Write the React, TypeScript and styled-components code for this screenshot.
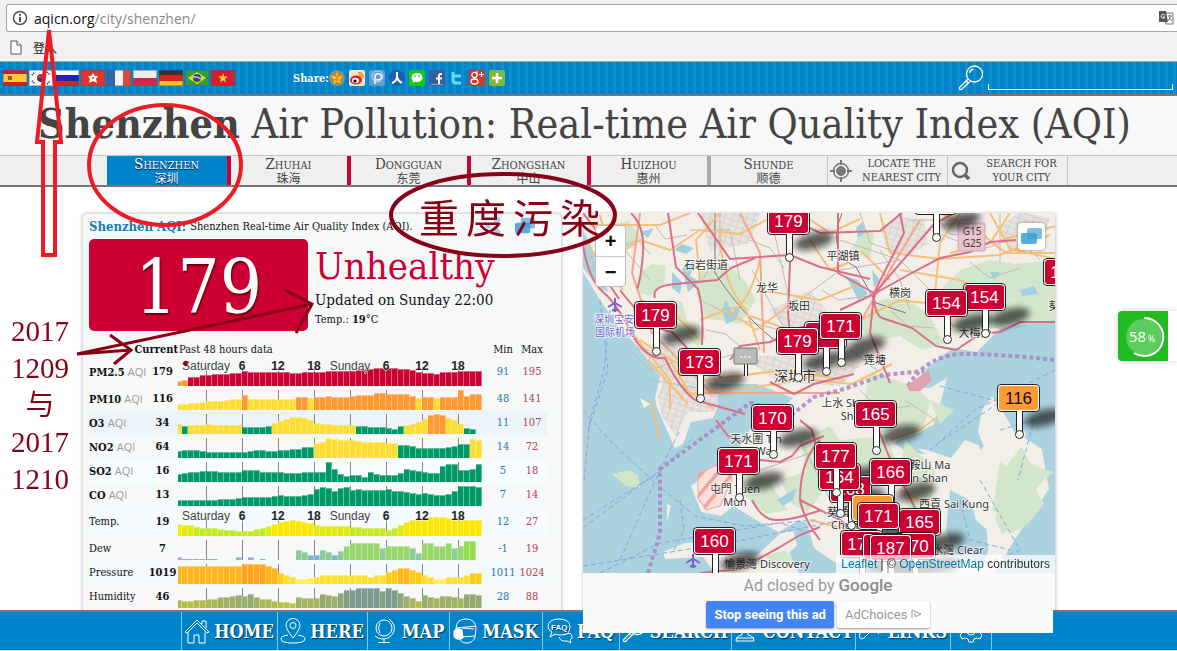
import React from 'react';
import styled, { createGlobalStyle, css } from 'styled-components';

const serif = `'DejaVu Serif Condensed', 'Liberation Serif', 'Noto Sans CJK SC', serif`;
const sans = `'Liberation Sans', 'Noto Sans CJK SC', sans-serif`;
const blue = '#0084c9';
const red = '#cc0033';
const ink = '#880015';

const GlobalStyle = createGlobalStyle`
  * { box-sizing: border-box; }
  body { margin: 0; background: #fff; font-family: ${serif}; color: #222; }
  button, input { font: inherit; }
  a { color: inherit; text-decoration: none; }
`;

const Page = styled.div`
  position: relative;
  height: 100vh;
  overflow: hidden;
`;

/* ---------- browser chrome ---------- */
const Chrome = styled.div`
  height: 62px;
  padding: 4px 0 0 6px;
  background: #f1f1f1;
  border-bottom: 1px solid #aaa;
`;
const Omnibox = styled.div`
  display: flex;
  align-items: center;
  gap: 6px;
  height: 28px;
  padding: 0 3px 0 5px;
  background: #fff;
  border: 1px solid #a5a5a5;
  border-right: 0;
  border-radius: 3px 0 0 3px;
`;
const Address = styled.input`
  width: 0;
  border: 0;
  padding: 0;
`;
const Url = styled.label`
  flex: 1;
  display: flex;
  color: #888;
  font: 14px 'Open Sans', sans-serif;
  b { color: #111; font-weight: 400; }
`;
const Bookmarks = styled.div`
  display: flex;
  align-items: center;
  gap: 11px;
  height: 31px;
  padding-left: 4px;
  font: 12px 'Noto Sans CJK SC', sans-serif;
  color: #222;
`;

/* ---------- page header ---------- */
const TopBar = styled.header`
  display: flex;
  align-items: center;
  height: 34px;
  padding-right: 4px;
  background: repeating-linear-gradient(90deg, #0084c9 0 5px, #118dce 5px 8px);
  border-bottom: 2px solid #777;
  box-shadow: 0 1px 2px #999;
`;
const Flags = styled.nav`
  display: flex;
  gap: 2px;
  padding-left: 3px;
  width: 293px;
  svg { display: block; }
`;
const Share = styled.div`
  display: flex;
  align-items: center;
  gap: 4px;
  flex: 1;
  color: #fff;
  font-size: 11px;
  svg { display: block; }
  b { width: 32px; white-space: nowrap; }
`;
const SearchForm = styled.label`
  display: flex;
  align-items: flex-end;
  gap: 4px;
  width: 215px;
`;
const SearchInput = styled.input`
  flex: 1;
  min-width: 0;
  height: 6px;
  margin-bottom: 1px;
  padding: 0;
  background: transparent;
  border: 0;
  border-left: 1px solid #fff;
  border-right: 1px solid #fff;
  border-bottom: 1px solid #fff;
`;
const Title = styled.h1`
  margin: 0;
  height: 59px;
  padding-right: 8px;
  background: #f8f8f8;
  color: #444;
  text-align: center;
  white-space: nowrap;
  font-size: 41px;
  line-height: 56px;
  font-weight: 400;
`;
const Tabs = styled.nav`
  display: flex;
  justify-content: center;
  height: 32px;
  padding-right: 3px;
  background: #efefef;
  border-top: 1px solid #c4c4c4;
  border-bottom: 2px solid #777;
`;
const Tab = styled.a<{ $active?: boolean; $edge: string }>`
  width: 120px;
  border-left: ${p => (p.$active ? 0 : 4)}px solid ${p => p.$edge};
  text-align: center;
  font-size: 15px;
  line-height: 16px;
  font-variant: small-caps;
  color: #444;
  ${p => p.$active && css`
    color: #fff;
    background: ${blue};
    text-shadow: 0 1px 1px #004;
  `}
  small {
    display: block;
    font: 12px/11px 'Noto Sans CJK SC', sans-serif;
  }
`;
const ToolTab = styled.a`
  display: flex;
  align-items: center;
  width: 120px;
  padding-left: 2px;
  border-left: 1px solid #c4c4c4;
  font-size: 11px;
  line-height: 14px;
  color: #444;
  &:last-child { width: 121px; border-right: 1px solid #c4c4c4; }
  span { flex: 1; padding-left: 5px; text-align: center; white-space: nowrap; }
`;

/* ---------- cards ---------- */
const Main = styled.main`
  display: grid;
  grid-template-columns: 480px 473px;
  gap: 21px;
  max-width: 1013px;
  margin: 0 auto;
  padding-top: 26px;
`;
const Card = styled.section`
  height: 480px;
  background: #f7f9f9;
  border: 1px solid #ddd;
  border-radius: 5px;
  box-shadow: 0 0 3px #bbb;
`;
const AqiCard = styled(Card)` padding: 1px 6px; `;
const MapCard = styled(Card)` border-left: 0; border-top: 0; border-radius: 3px; `;
const CardHead = styled.div`
  display: flex;
  align-items: center;
  height: 22px;
  gap: 4px;
  font-size: 11px;
  color: #111;
  h2 { margin: 0; font-size: 13px; color: #1479bd; }
  p { margin: 0; flex: 1; white-space: nowrap; }
`;
const HeadIcons = styled.span`
  display: flex;
  gap: 12px;
  padding-right: 19px;
`;
const Reading = styled.div`
  display: flex;
  gap: 7px;
  height: 94px;
  margin-top: 2px;
`;
const BigNumber = styled.div`
  width: 219px;
  height: 92px;
  border-radius: 5px;
  background: ${red};
  color: #fff;
  text-align: center;
  font-size: 74px;
  line-height: 96px;
  text-shadow: 1px 2px 2px #600;
`;
const Verdict = styled.div`
  font-size: 15px;
  color: #111;
  white-space: nowrap;
  strong { display: block; font-size: 38px; line-height: 54px; height: 52px; font-weight: 400; color: ${red}; }
  div { line-height: 18px; }
  p { margin: 0; font-size: 11px; line-height: 22px; }
`;
const Table = styled.table`
  width: 458px;
  margin-top: 9px;
  border-collapse: collapse;
  table-layout: fixed;
  font-size: 11px;
  color: #111;
  td, th { padding: 0; white-space: nowrap; }
`;
const HeadRow = styled.tr`
  height: 15px;
  line-height: 14px;
  th { font-weight: 400; }
  th:first-child { text-align: right; font-weight: 700; }
  th:nth-child(2) { text-align: left; padding-left: 1px; }
`;
const Row = styled.tr<{ $bg?: string; $tall?: boolean }>`
  height: ${p => (p.$tall ? 30 : 24)}px;
  background: ${p => p.$bg || 'transparent'};
  line-height: 16px;
  th { text-align: left; font-weight: 400; }
  th span { color: #999; font-family: 'Open Sans', sans-serif; }
  td { text-align: center; }
  td:nth-child(2) { font-weight: 700; }
  td:nth-child(3) { vertical-align: bottom; }
  td:nth-child(4) { color: #1f78b4; }
  td:nth-child(5) { color: #b8404a; }
  svg { display: block; margin-bottom: 1px; }
`;

/* ---------- map ---------- */
const MapBox = styled.div`
  position: relative;
  height: 360px;
  overflow: hidden;
  background: #aad3df;
  font-family: ${sans};
`;
const MapArt = styled.svg`
  display: block;
  width: 472px;
  height: 360px;
`;
const Pin = styled.a<{ $x: number; $y: number; $tone?: string }>`
  position: absolute;
  left: ${p => p.$x - 604}px;
  top: ${p => p.$y - 227}px;
  width: 43px;
  height: 28px;
  padding: 1px;
  border: 1px solid #222;
  border-radius: 4px;
  background: #fff;
  span {
    display: block;
    height: 24px;
    border-radius: 3px;
    text-align: center;
    font-size: 17px;
    line-height: 25px;
    background: ${p => p.$tone || red};
    color: ${p => (p.$tone ? '#111' : '#fff')};
  }
  &::before {
    content: '';
    position: absolute;
    left: 18px;
    top: 26px;
    width: 5px;
    height: 20px;
    background: #fff;
    border: solid #222;
    border-width: 0 1px;
  }
  &::after {
    content: '';
    position: absolute;
    left: 17px;
    top: 45px;
    width: 7px;
    height: 7px;
    background: #fff;
    border: 1px solid #222;
    border-radius: 50%;
  }
`;
const ZoomBox = styled.div`
  position: absolute;
  left: 12px;
  top: 12px;
  width: 31px;
  border: 1px solid #bbb;
  border-radius: 4px;
  background: #fff;
  button {
    display: block;
    width: 100%;
    height: 30px;
    padding: 0;
    border: 0;
    background: none;
    font: bold 20px/28px ${sans};
    color: #111;
  }
  button + button { border-top: 1px solid #ccc; }
`;
const LayerButton = styled.button`
  position: absolute;
  right: 10px;
  top: 10px;
  width: 27px;
  height: 27px;
  padding: 2px;
  border: 0;
  border-radius: 4px;
  background: #fff;
  box-shadow: 0 0 3px #777;
`;
const Credit = styled.div`
  position: absolute;
  right: 0;
  bottom: 0;
  padding: 0 5px;
  background: rgba(255, 255, 255, 0.72);
  font-size: 12px;
  line-height: 18px;
  color: #333;
  a { color: #0078a8; }
`;
const Ad = styled.aside`
  position: relative;
  z-index: 3;
  width: 470px;
  height: 60px;
  background: #fafafa;
  font-family: Roboto, sans-serif;
  text-align: center;
  p { margin: 0; padding-top: 1px; font-size: 16px; line-height: 24px; color: #999; }
  p b { font-weight: 500; font-size: 17px; line-height: 20px; color: #8c8c8c; }
`;
const AdButtons = styled.div`
  display: flex;
  justify-content: center;
  gap: 3px;
  padding-top: 3px;
`;
const AdButton = styled.button<{ $primary?: boolean }>`
  height: 27px;
  padding: 0 8px;
  border: 0;
  border-radius: 2px;
  white-space: nowrap;
  font: ${p => (p.$primary ? '700' : '400')} 13px Roboto, sans-serif;
  background: ${p => (p.$primary ? '#4285f4' : '#fff')};
  color: ${p => (p.$primary ? '#fff' : '#999')};
  box-shadow: 0 1px 2px #999;
`;

/* ---------- floating parts ---------- */
const Footer = styled.nav`
  position: fixed;
  z-index: 2;
  left: 0;
  right: 0;
  bottom: 0;
  display: flex;
  justify-content: center;
  height: 41px;
  padding-right: 5px;
  background: ${blue};
  border-top: 2px solid #777;
  border-bottom: 1px solid #ddd;
`;
const FootLink = styled.a<{ $w: number }>`
  display: flex;
  align-items: center;
  justify-content: center;
  gap: 4px;
  width: ${p => p.$w}px;
  border-right: 1px solid #8cc8ea;
  color: #fff;
  font-size: 18px;
  font-weight: 700;
  text-shadow: 1px 1px 1px #035;
  &:first-child { border-left: 1px solid #8cc8ea; }
  svg { flex: none; }
`;
const Meter = styled.aside`
  position: fixed;
  right: 0;
  top: 311px;
  display: flex;
  width: 59px;
  height: 50px;
  background: #fff;
  border-radius: 4px 0 0 4px;
  box-shadow: 0 0 5px #ccc;
  svg { display: block; border-radius: 4px 0 0 4px; }
`;
const Notes = styled.div`
  position: absolute;
  z-index: 4;
  left: 0;
  top: 0;
  pointer-events: none;
  color: ${ink};
  svg { display: block; }
`;
const DateNote = styled.p`
  position: absolute;
  left: 10px;
  top: 313px;
  width: 60px;
  margin: 0;
  text-align: center;
  font: 29px/37px 'Liberation Serif', 'Noto Sans CJK SC', serif;
`;
const LevelNote = styled.p`
  position: absolute;
  left: 419px;
  top: 188px;
  display: flex;
  gap: 7px;
  margin: 0;
  font: 40px/56px 'Noto Sans CJK SC', sans-serif;
`;

/* ---------- charts ---------- */
type Tint = (h: number, i: number) => string;
const G = '#009966', Y = '#ffde33', O = '#ff9933';
const within = (i: number, list: number[]) => list.includes(i);
const mix = (t: number) => {
  const a = [190, 196, 66], b = [123, 154, 144];
  return `rgb(${a.map((v, k) => Math.round(v + (b[k] - v) * t)).join(',')})`;
};

interface Series { name: string; aqi?: boolean; now: string; min: string; max: string; tall?: boolean; bg?: string; data: number[]; tint: Tint; }
const series: Series[] = [
  { name: 'PM2.5', aqi: true, now: '179', min: '91', max: '195', tall: true,
    data: [5,6,9,9,11,11,12,12,12,13,13,15,14,14,14,14,14,14,14,13,13,14,14,14,14,15,15,15,15,15,16,17,17,18,18,18,18,17,17,16,14,13,13,12,14,14,14,15,15,15,15],
    tint: (_, i) => (i < 2 ? O : red) },
  { name: 'PM10', aqi: true, now: '116', min: '48', max: '141',
    data: [6,6,7,7,8,9,9,9,10,11,11,15,11,11,11,11,11,11,11,11,13,13,12,13,13,14,13,13,13,14,15,15,15,17,17,16,16,16,16,14,12,13,13,12,13,13,13,20,14,16,16],
    tint: (_, i) => (within(i, [11, 20, 21]) || (i > 22 && !within(i, [40, 43])) ? O : Y) },
  { name: 'O3', aqi: true, now: '34', min: '11', max: '107', bg: '#ecf4fa',
    data: [10,8,9,9,9,10,9,9,9,9,9,7,7,7,7,8,11,13,15,17,17,16,14,11,10,10,9,9,9,9,8,8,7,7,7,6,5,8,9,10,12,15,19,20,19,16,14,10,6,5,0],
    tint: (_, i) => (within(i, [42, 43, 44]) ? O : i === 1 || (i > 10 && i < 16) || (i > 29 && i < 38) || i > 47 ? G : Y) },
  { name: 'NO2', aqi: true, now: '64', min: '14', max: '72',
    data: [7,8,8,8,7,6,6,6,6,6,6,6,7,8,8,7,7,8,8,9,9,11,11,15,16,20,19,18,18,18,17,16,16,16,16,15,15,13,13,12,10,10,10,10,10,11,12,14,14,19,18],
    tint: (_, i) => ((i > 22 && i < 37) || i > 48 ? Y : G) },
  { name: 'SO2', aqi: true, now: '16', min: '5', max: '18', bg: '#f6fcff',
    data: [8,9,10,10,11,11,11,10,10,10,10,12,12,12,10,10,10,10,9,9,9,10,10,10,10,20,13,8,6,7,7,5,10,8,7,7,7,9,13,12,11,10,9,9,16,18,18,12,12,13,18],
    tint: () => G },
  { name: 'CO', aqi: true, now: '13', min: '7', max: '14',
    data: [6,6,6,6,6,6,6,7,7,7,8,9,9,9,9,9,10,11,10,10,10,11,12,17,19,18,15,18,19,16,17,16,16,16,16,17,15,15,14,13,12,13,12,11,11,12,15,20,20,20,19],
    tint: () => G },
  { name: 'Temp.', now: '19', min: '12', max: '27', tall: true, bg: '#f5fbff',
    data: [12,11,11,9,8,8,8,7,6,6,5,5,5,7,8,10,12,14,15,16,15,14,13,11,10,10,10,10,10,9,9,8,8,8,8,6,8,11,14,16,17,17,19,19,19,18,17,16,16,16,16],
    tint: h => (h > 11 ? '#fce803' : h > 9 ? '#e2ea10' : '#c4e822') },
  { name: 'Dew', now: '7', min: '-1', max: '19',
    data: [3,1,1,1,1,1,1,0,0,0,3,0,3,0,1,0,0,0,0,0,10,8,5,5,10,8,5,9,14,17,17,17,17,17,12,14,14,14,14,12,7,17,17,14,14,17,12,14,19,19,0],
    tint: (h, i) => (i < 15 ? '#8fb0dd' : h < 6 ? '#82b3cc' : h < 13 ? '#8ecb9a' : h < 18 ? '#98d76a' : '#93de4c') },
  { name: 'Pressure', now: '1019', min: '1011', max: '1024', bg: '#f3f9fd',
    data: [18,18,18,18,18,18,18,18,18,18,18,20,20,20,20,18,16,11,9,7,5,5,6,7,9,9,9,9,9,9,9,9,7,9,9,12,14,16,16,14,12,9,7,5,5,7,7,7,9,11,11],
    tint: h => (h > 18 ? '#ffa51f' : h > 15 ? '#ffb61c' : h > 10 ? '#ffcc1c' : h > 6 ? '#ffe030' : '#fff050') },
  { name: 'Humidity', now: '46', min: '28', max: '88',
    data: [8,7,7,8,8,9,9,11,11,12,13,12,14,11,9,9,7,6,6,5,11,10,10,10,14,13,12,15,18,18,20,20,20,20,17,20,18,15,12,10,7,13,11,10,12,12,11,10,14,14,13],
    tint: h => mix(Math.min(1, (h - 5) / 14)) },
  { name: 'Wind', now: '2', min: '1', max: '6', bg: '#f5fbff',
    data: [1,3], tint: () => '#8fb0dd' },
];
const hours = ['Saturday', '6', '12', '18', 'Sunday', '6', '12', '18'];

function Chart({ s }: { s: Series }) {
  const h = s.tall ? 28 : 20;
  return (
    <svg width="304" height={h} role="img" aria-label={`${s.name} history`}>
      {hours.map((_, k) => <path key={k} d={`M${28.5 + 36 * k} ${s.tall ? 9 : 0}V${h}`} stroke="#888" />)}
      {s.data.map((v, i) => {
        const x = i === 0 ? 0 : 4 + 6 * (i - 1);
        const w = i === 0 ? 4 : 6;
        return v > 0 && (
          <g key={i} fill={s.tint(v, i)}>
            <rect x={x} y={h - v} width={w} height={v} opacity="0.6" />
            <rect x={x} y={h - v + (v > 1 ? 1 : 0)} width={w - 1} height={v > 1 ? v - 1 : 1} />
          </g>
        );
      })}
      {s.tall && hours.map((t, k) => (
        <text key={k} x={28 + 36 * k} y="12" textAnchor="middle" fontFamily="Liberation Sans" fontSize="12"
          fontWeight={t.length > 2 ? 400 : 700} fill={t.length > 2 ? '#444' : '#222'} stroke="#f7f9f9" strokeWidth="1" paintOrder="stroke">{t}</text>
      ))}
    </svg>
  );
}

/* ---------- icons ---------- */
const flagArt: React.ReactNode[] = [
  <><path fill="#c8202c" d="M0 0h24v16H0z" /><path fill="#fc3" d="M0 4h24v8H0z" /><path fill="#a52" d="M5 6h4v4H5z" /></>,
  <><path fill="#fff" d="M0 0h24v16H0z" /><path fill="#c33" d="M8 8a4 4 0 0 1 8 0z" /><path fill="#247" d="M8 8a4 4 0 0 0 8 0z" /><path stroke="#333" strokeWidth="2" strokeDasharray="1 1" d="m3 5 3-3M18 2l3 3M3 11l3 3M18 14l3-3" /></>,
  <><path fill="#fff" d="M0 0h24v6H0z" /><path fill="#22b" d="M0 5h24v6H0z" /><path fill="#d22" d="M0 11h24v5H0z" /></>,
  <><path fill="#e03528" d="M0 0h24v16H0z" /><path fill="#fff" d="m12 3 2 3 3 0-2 3 1 4-4-2-4 2 1-4-2-3 3 0z" /><circle cx="12" cy="8" r="1" fill="#e03528" /></>,
  <><path fill="#3565a8" d="M0 0h8v16H0z" /><path fill="#f4f4f4" d="M8 0h8v16H8z" /><path fill="#e0463c" d="M16 0h8v16h-8z" /></>,
  <><path fill="#eee" d="M0 0h24v8H0z" /><path fill="#d0284c" d="M0 8h24v8H0z" /></>,
  <><path fill="#333" d="M0 0h24v5H0z" /><path fill="#d4281c" d="M0 5h24v6H0z" /><path fill="#f8c020" d="M0 11h24v5H0z" /></>,
  <><path fill="#2ca048" d="M0 0h24v16H0z" /><path fill="#f8d020" d="m12 2 9 6-9 6-9-6z" /><circle cx="12" cy="8" r="4" fill="#24508c" /><path stroke="#fff" d="M8 7q4-1 8 2" fill="none" /></>,
  <><path fill="#d02030" d="M0 0h24v16H0z" /><path fill="#fc3" d="m12 3 1.300 3.500h3.700l-3 2.300 1 3.700-3-2.200-3 2.200 1-3.700-3-2.300h3.700z" /></>,
];
const countries = ['Spain', 'Korea', 'Russia', 'Hong Kong', 'France', 'Poland', 'Germany', 'Brazil', 'Vietnam'];

const shareArt: [string, React.ReactNode][] = [
  ['Qzone', <><circle cx="8" cy="8" r="8" fill="#6a9aa0" /><path fill="#fc2" stroke="#d80" d="m8 1 2 4.500 5 .5-4 3.500 1 5-4-2.500-4 2.500 1-5-4-3.500 5-.5z" /><path d="M6 6h4l-4 4h4" stroke="#c60" fill="none" /></>],
  ['Weibo', <><rect width="16" height="16" rx="2" fill="#f7e3d2" /><ellipse cx="7" cy="10" rx="6" ry="4.500" fill="#d22" /><ellipse cx="6.500" cy="10.500" rx="3.500" ry="2.700" fill="#fff" /><circle cx="6" cy="11" r="1.600" /><path d="M9 3a4 4 0 0 1 5 5M10 5a2 2 0 0 1 2 2" stroke="#f80" fill="none" strokeWidth="1.400" /></>],
  ['Pengyou', <><rect width="16" height="16" rx="2" fill="#5a9fd0" /><path d="M6 14V5.500a3.500 3 0 1 1 1.500 4" stroke="#fff" strokeWidth="1.500" fill="none" /><circle cx="8.500" cy="6.500" r="5.500" stroke="#cde" fill="none" /></>],
  ['Renren', <><circle cx="8" cy="8" r="8" fill="#1c5fae" /><path d="M8 2v5q0 4-5 6M8 7q1 4 5 6" stroke="#fff" strokeWidth="2" fill="none" /></>],
  ['WeChat', <><rect width="16" height="16" rx="2" fill="#1c1" /><ellipse cx="8" cy="7.500" rx="5.500" ry="4.500" fill="#fff" /><path d="m4 10-.5 3 3-2z" fill="#fff" /><circle cx="6" cy="6" r=".8" fill="#1a1" /><circle cx="10" cy="6" r=".8" fill="#1a1" /></>],
  ['Facebook', <><rect width="16" height="16" rx="2" fill="#3560a0" /><path d="M13 4h-1q-2 0-2 2v8M7 8.500h6" stroke="#fff" strokeWidth="2" fill="none" /><path d="M2 14.500h12" stroke="#8ac" /></>],
  ['Twitter', <path d="M4 2v8q0 3 3 3h5M4 6h8" stroke="#5fdcff" strokeWidth="3" fill="none" />],
  ['Google Plus', <><rect width="16" height="16" rx="1" fill="#c43c30" /><circle cx="5.500" cy="5" r="2.600" stroke="#fff" fill="none" strokeWidth="1.300" /><ellipse cx="5.500" cy="11.500" rx="3.500" ry="2.500" stroke="#fff" fill="none" strokeWidth="1.300" /><path d="M12.500 2v5M10 4.500h5M7 2h2" stroke="#fff" strokeWidth="1.200" /></>],
  ['More', <><rect width="16" height="16" rx="2" fill="#80b83c" /><path d="M8 3v10M3 8h10" stroke="#fff" strokeWidth="2.500" /></>],
];

const Glass = ({ size }: { size: number }) => (
  <svg width={size} height={size} viewBox="0 0 26 26" fill="none" stroke="#fff" strokeWidth="1.300">
    <circle cx="16.500" cy="9" r="8" /><path d="M11.500 8a5 5 0 0 1 4-4" /><path d="m10 14-8.500 8.500q-.5 2.500 2 2L12 16.500M8 16l2.500 2" />
  </svg>
);
const Layers = ({ w }: { w: number }) => (
  <svg width={w} height={w} viewBox="0 0 23 23"><rect x="7" y="3" width="15" height="11" rx="2" fill="#7cbfe2" /><rect x="1" y="8" width="16" height="11" rx="2" fill="#3d9fd3" opacity=".85" /></svg>
);
const line = { width: 26, height: 26, viewBox: '0 0 26 26', fill: 'none', stroke: '#fff', strokeWidth: 1 } as const;
const footer: [string, number, React.ReactNode][] = [
  ['HOME', 97, <svg {...line}><path d="M1 14 13 2l12 12-2 1L13 5 3 15zM4 14.500V25h6v-8h5v8h6V14.500M18 6V3h4v7" /></svg>],
  ['HERE', 90, <svg {...line}><path d="M13 20Q6 11 6 7.500a7 7 0 0 1 14 0Q20 11 13 20zM8 17q-7 1-7 4 0 4 12 4t12-4q0-3-7-4" /><circle cx="13" cy="7.500" r="3" /></svg>],
  ['MAP', 82, <svg {...line}><circle cx="12" cy="10" r="8" /><path d="M17 1q7 5 5 12-3 8-11 8Q6 21 3 18M12 21v3M6 24.500h12M8 5q-3 5 0 10" /></svg>],
  ['MASK', 93, <svg {...line}><path d="M4 11Q4 1 14 1t10 10l-1 8q-2 6-8 6t-7-4M4 10l20-2M10 10l12 1M10 19l13-1" /><path fill="#fff" d="M2 13q4-4 8-1l1 8q-5 3-9-1z" /></svg>],
  ['FAQ', 77, <svg {...line}><path d="M12 1q11 0 11 8t-9 8q-4 0-6-1l-5 3 2-5Q1 12 1 9q0-8 11-8zM17 17q8-4 8 2 0 2-2 3l1 3-4-2q-6 1-8-4" /><text x="4" y="12" fontSize="8" fill="#fff" stroke="none" fontFamily="Liberation Sans">FAQ</text></svg>],
  ['SEARCH', 112, <Glass key="g" size={24} />],
  ['CONTACT', 124, <svg {...line}><circle cx="12" cy="9" r="5" /><path d="M9 14v3q-6 1-6 6h18q0-5-6-6v-3M3 20h18" /></svg>],
  ['LINKS', 95, <svg {...line}><path d="m11 15 8-8q3-2 5 0t0 5l-4 4M15 11l-9 9q-3 2-4 0t0-5l4-4" /></svg>],
  ['', 41, <svg {...line}><circle cx="13" cy="13" r="4" /><path d="M11 2h4l1 3 3 1 3-1 2 4-2 2v4l2 2-2 4-3-1-3 1-1 3h-4l-1-3-3-1-3 1-2-4 2-2v-4L2 9l2-4 3 1 3-1z" /></svg>],
];

/* ---------- map content ---------- */
const greens = [
  'M640 272l12-8 14 2-2 18-14 12-14-4zM700 268l22-10 24 24 10 18-16 24-34-6-10-24zM668 298l14 4 6 22 18 14-8 8-24-20zM610 245l12 6 20-14-14-16-20 4z',
  'M880 300l24-4 26 20 14 28-22 6-22-14-30 6-12-20zM930 300l30-30 30-10 26 4 40-4v60l-60 8-40 0zM850 250l14-20 10 4-4 26zM908 234l12-4 2 14-12 4z',
  'M870 372l44 14 16 14-6 30-46 2-16-20zM800 440l30-14 20 30-20 20-20 12zM840 440l46-4 10 24-30 20zM744 466l24 14 20 30-22 4-24-20zM780 480l30-10 14 20-16 22-16-8z',
  'M905 440l30 30-6 50 20 40-30-20-20-60zM930 400l24 10-14 14zM765 556l20-6 8 10-16 10zM1000 460l20-18 8 20 22 10-14 18 8 14-16 20-18 10-14-22 6-20z',
];
const grey = 'M640 350l30-10 24 30 20-4 6 22-6 24-26 0-12 24-14-20-4-20 6-14zM770 310l40-20 16 20-4 40-30 26 0-40zM1000 226l20-14 30 6-10 30-30 6zM740 356h60l60 10-20 20-60-4zM845 490l36 8 10 40-36-4zM700 213h60l-10 30-40 8zM880 228l20-12 24 4 4 24-20 12-20-4z';
const lakes = 'M633 308l8 8-6 10zM672 272l10 10-2 12-8-6zM682 268l14-8-6 16 10 6-12 10zM722 310l4-10 6 12 10-8-6 16-10 4zM846 276l12 4 10 14-10 6zM856 228l6-6 4 10-8 6zM674 250l8-6 12 4-8 6zM640 232l14-4-6 10zM960 240l14 2-10 4zM1020 290l14-4 4 8-16 2zM990 272l10 0-6 8zM872 270l8 10-6 8zM777 500l20-12-4 12-10 6z';
const motorways = [
  'M583 246q6 34 20 46t28 40 34 26q14 30 30 42l50 14',
  'M631 213q14 14 12 40t-6 36M668 213l8 54 22 22q6 20 4 56M698 213l32 46 60-4 30 12 50 12M790 213v50l-2 50 4 40',
  'M655 298q-4-12 20-14l42-4 14-12 24-10M620 290q30 40 52 42l30 32 20 14M730 360l10-14 30-4 30-14 40-12M840 310l34-16 60-70 22-12M780 213l40 20 60-2 24-20M874 294l36-20 30-16 30-6 20-10 26-2',
  'M874 294q0 20 8 24l30 10 24 18 20 4 24-16 20-2 20-10h40M838 213v60l36 20-4 40 20 50M716 420l12 16 14 6M583 213l20 26-4 30 20 30M900 213l4 20-30 60M770 382l24 12 20-10 40-10',
  'M752 500q10 20 24 20t30-5 14-5M820 440q-20 20-20 60 4 20 20 40M700 573l40-4 40-22 20-12 20-8M800 420l12 10 6 24M870 400l8 28 10 26 20 40 20 40M800 500l40 20 40 30 20 20M760 460l20 2 12-6 8-10 24-10',
];
const orange = 'M590 225h70l30-12M610 260l30-20 30 10 30-20 40 4 26-14M640 340l30 20 20 34 30-4 60-6 40-10M655 350l50 30 80-10 60 10M630 330l40 50v30M720 230q0 50 26 80l14 40M700 320l26-10 30 20 40-30M810 240l20 30 20-8M760 260q-10 40-26 50M760 290l60 10 40-16M880 213l10 40 50 6 60-4 50-20M960 213l-20 30-6 60 20 24M900 270l60 10 40 20M990 213l20 36 46 10M1000 240l56-14M860 320l40-20 50 6M940 213l40 20 26 20h50M812 380l40 4 40-20M810 520l40 10 40-14M890 440l30-10 16-12M900 490l40 20M650 400l10 40M680 385l34 24M640 300l30 10 30 30M583 240l40 50M600 215l10 40M800 213l30 20 30-14M860 250l30 30M700 280l-4-40 24-27M790 330l-40-14M1010 213l-20 30-40 10M648 360l40 44';
const streets = 'M583 260l60-20M600 220l50 60M690 230l40 0 10 50M720 213v40l-20 30M752 270l50 90M770 213l20 90M800 300l40-30 60-10M840 240l60 20 40 40M910 220h60l30 30M860 213l10 30 30 10M930 230l50 20 30-10M1000 213v50M630 350l20 20 30-10M850 350l40 30M800 440l40 80 30 40M760 470l60-20M650 380l60 10M740 320l80 20M706 330l20 4 20 18M604 236l14 10 20-6 12 14M655 225l10 14 22-4M750 240l20 8 14 20M700 300l20 10 24-4M822 290l16 10 30-4M890 310l18 16 26 2M970 262l20 16 30-10M940 222l10 12 20 2M880 250l20 30 10 30M1020 240l20 20M690 350l24 10 20-6M860 390l20 20 30-4M905 400l30 20';
const labels: [number, number, string, number?, string?][] = [
  [706, 269, '石岩街道'], [767, 292, '龙华'], [799, 310, '坂田'], [843, 260, '平湖镇'], [900, 297, '横岗'], [975, 337, '大梅沙'], [875, 364, '莲塘'],
  [795, 381, '深圳市', 14], [614, 323, '深圳宝安', 10, '#76c'], [615, 336, '国际机场', 10, '#76c'], [840, 407, '上水 Sh'], [852, 420, 'Shui'],
  [756, 443, '天水圍 Tin'], [765, 455, 'Wai'], [735, 493, '屯門 Tuen'], [735, 506, 'Mun'], [930, 469, '鞍山 Ma'], [930, 482, 'n Shan'], [954, 508, '西貢 Sai Kung'],
  [838, 516, '葵涌'], [848, 529, 'Chung'], [958, 554, '水灣 Clear'], [767, 568, '愉景灣 Discovery'], [1054, 310, '葵'],
];
const pins: [number, number, string, string?][] = [
  [935, 201, ''], [788, 221, '179'], [1064, 272, '157'], [984, 297, '154'], [946, 303, '154'], [655, 315, '179'], [825, 335, ''], [840, 326, '171'],
  [797, 341, '179'], [699, 362, '173'], [1018, 398, '116', '#ff9933'], [875, 414, '165'], [772, 418, '170'], [850, 489, '168'], [839, 477, '164'], [835, 456, '177'], [738, 461, '171'],
  [890, 472, '166'], [872, 508, '', '#ff9933'], [919, 522, '165'], [878, 516, '171'], [714, 541, '160'], [861, 544, '174'], [914, 546, '170'], [883, 547, ''], [890, 548, '187'],
];

function MapDrawing() {
  return (
    <MapArt viewBox="583 213 472 360" aria-label="Shenzhen area map">
      <defs>
        <filter id="soft"><feGaussianBlur stdDeviation="3" /></filter>
        <pattern id="blocks" width="7" height="6" patternUnits="userSpaceOnUse" patternTransform="rotate(18)"><path d="M0 0H7M0 0V6" stroke="#c8c4c0" strokeWidth="1" fill="none" /></pattern>
        <pattern id="hatch" width="12" height="12" patternUnits="userSpaceOnUse" patternTransform="rotate(40)"><path d="M0 0V12" stroke="#f2a09c" strokeWidth="7" /></pattern>
      </defs>
      <g fill="#f2efe9">
        <path d="M583 213h472v107l-22 0-33 8-23 24-24-4-23 17-20 22 20 1 17-10-7 27-7 20-6 5-30 10 3 6 27 4 24 8 14-18 16 6 10-14-14-16 12-30 14 20 26-8-4 40 24 16-4 20 22 14-4 20-20 10-30 44-8 24-120 4-36-20-14-36-36-14-20 12-16-8-30-18-12 10-20-4-10-26 24-18 24-20 20-34 24-6 10-10-36-14h-38l-2 24-4 10-22 4-8 22-8 4-18-40-2-10 6-26-18-20-25-26-18-26-12-20-13-20z" />
        <path d="M663 552l22-9 28-2 6 12 38 2 24-22 12-2 4 14-8 8 10 20h-84l-12-16-38 2z" />
        <path d="M806 520l30 12 34 20-10 12-26-2-20-14z" />
      </g>
      <g fill="#aad3df">
        <path d="M1055 322l-54 8-22 24-24 2-24 20-6 10 22-10 6 8-14 24 4 10 26 8 12 24 20-30 12 20 14-10 28 2z" />
        <path d="M583 230l10 20 4 24 12 18-10-4-16-20z" />
        <path d="M894 442l20-6 16-10 24 0-14 10-24 12 10 6-20-2zM950 490l20 10 6 20 18 16-12 30-30-14-6-22zM846 546l30 6 60 8-10 20h-80zM1040 440h15v133h-60l20-34 34-50z" />
      </g>
      <g fill="#d3e6cb">{greens.map(d => <path key={d} d={d} />)}</g>
      <path d="M1000 462l18-22 14 26 22 6-20 16 4 16-14 20-22 10-10-22zM630 470l8 6 2 12-14-2-14-12z" fill="#d3e6cb" />
      <g fill="#f2efe9"><path d="M982 410l10-14 16 24 14 26-16 20-20-14-8-20zM964 470l6-14 14 12 8 20-16 8zM640 398l10 6-6 4zM985 505l12 8-4 10zM986 520l10 20-8 10zM667 504l4 2-4 16z" /></g>
      <path d={grey} fill="#e6e2dd" /><path d={grey} fill="url(#blocks)" />
      <path d="M698 474l20-10 10-4 4 20-12 26-14 4-8-12z" fill="#fde0dc" /><path d="M698 474l20-10 10-4 4 20-12 26-14 4-8-12z" fill="url(#hatch)" stroke="#f0a09c" />
      <path d={lakes} fill="#a4cfdf" />
      <path d={streets} stroke="#bfbab6" fill="none" />
      <path d="M842 213q-16 40 14 54l20 36 30 10M715 213v60q40 60 80 80" stroke="#777" fill="none" />
      <path d={orange} stroke="#f5c07a" strokeWidth="2" fill="none" strokeLinejoin="round" />
      <path d="M740 213l20 40 4 100M640 213l-8 60 20 60 60 60M850 340l40-70 30-50M700 393h140" stroke="#f4a58c" strokeWidth="2" fill="none" />
      <g stroke="#dc6f86" strokeWidth="2" fill="none" strokeLinejoin="round">{motorways.map(d => <path key={d} d={d} />)}</g>
      <path d="M583 410l26 30 50 46 36 30 50 10 70-6M583 528l80-60 30-30M583 566l150-24 100-20M620 560l40-90 20-40M610 310l-6 60-14 50-6 60M680 500l4 30-10 20M940 386l60 16-60 40-10 8M1055 370l-80 40-40 36M1000 430l34-10-16 60M980 480l40 70-40 16M960 500l10 40 40 10M600 300l8 70-20 60" stroke="#86a6e0" strokeDasharray="5 3" fill="none" />
      <path d="M583 520l80-50M600 573l60-30 120-20 30 10" stroke="#86a6e0" strokeDasharray="5 3" fill="none" />
      <path d="M648 573l12-40v-64l90-66 44 10 20-16 30-8 40-14 40-4M908 386q20-32 56-32t91 6" stroke="#a97fc4" strokeWidth="4" strokeDasharray="4 3" opacity=".8" fill="none" />
      <path d="M908 386l20-14 2 8-10 10-10 0z" fill="#d9a5b4" stroke="#ee9aa5" strokeWidth="2" />
      <path d="M615 298v14M608 307l7-4 7 4M612 311l3-2 3 2" stroke="#8461c4" strokeWidth="2" fill="none" />
      <path d="M693 554v14M686 563l7-4 7 4M690 567l3-2 3 2" stroke="#8461c4" strokeWidth="2" fill="none" />
      <g fill="#333" fontFamily="Noto Sans, Noto Sans CJK SC" textAnchor="middle" stroke="#fff" strokeWidth="2" strokeOpacity=".7" paintOrder="stroke">
        {labels.map(([x, y, t, s, c]) => <text key={t + x} x={x} y={y} fontSize={s || 11} fill={c}>{t}</text>)}
      </g>
      <rect x="958" y="223" width="27" height="28" rx="1" fill="#e8c4d0" stroke="#d8a0b4" />
      <g fontFamily="Noto Sans" fontSize="10" fill="#533" textAnchor="middle"><text x="972" y="235">G15</text><text x="972" y="247">G25</text></g>
      <g filter="url(#soft)" opacity=".65">
        {pins.map(([x, y], i) => <ellipse key={i} cx={x + 26} cy={y + 20} rx="20" ry="8" fill="#111" transform={`rotate(-14 ${x + 26} ${y + 20})`} />)}
      </g>
      <path d="M746 364v12" stroke="#222" strokeWidth="4" /><path d="M746 362v14" stroke="#fff" strokeWidth="2" />
      <rect x="734" y="348" width="23" height="16" rx="1" fill="#bbb" stroke="#777" /><path d="M740 357h11" stroke="#fff" strokeDasharray="3 1" />
    </MapArt>
  );
}

const tabs: [string, string, string][] = [
  ['Shenzhen', '深圳', blue], ['Zhuhai', '珠海', red], ['Dongguan', '东莞', red], ['Zhongshan', '中山', red], ['Huizhou', '惠州', red], ['Shunde', '顺德', '#aaa'],
];

export default function App() {
  return (
    <Page>
      <GlobalStyle />
      <Chrome>
        <Omnibox>
          <svg width="16" height="16" viewBox="0 0 16 16" fill="none" stroke="#555" strokeWidth="1.500"><circle cx="8" cy="8" r="6.500" /><path d="M8 7v5M8 4v1.800" strokeWidth="2" /></svg>
          <Url><Address aria-label="Address" readOnly /><b>aqicn.org</b>/city/shenzhen/</Url>
          <svg width="16" height="16" viewBox="0 0 16 16"><path d="M6 3h9v11H8z" fill="#fff" stroke="#777" /><path d="M1 1h7l2 11H1z" fill="#555" /><path d="M7 5.500A2 2 0 1 0 7 7H5" stroke="#fff" fill="none" /><path d="M10 6h4M12 5v1q0 3-2 5M11 8l3 3" stroke="#777" fill="none" /></svg>
        </Omnibox>
        <Bookmarks>
          <svg width="12" height="15" viewBox="0 0 12 15" fill="#fff" stroke="#555"><path d="M1 1h6l4 4v9H1z" /><path d="M7 1v4h4" /></svg>
          <span>登入</span>
        </Bookmarks>
      </Chrome>

      <TopBar>
        <Flags>
          {flagArt.map((f, i) => (
            <a href="#" key={i} aria-label={countries[i]}><svg width="24" height="16">{f}<path d="M.5 .5h23v15H.5z" fill="none" stroke="#555" strokeOpacity=".4" /></svg></a>
          ))}
        </Flags>
        <Share>
          <b>Share:</b>
          {shareArt.map(([n, art]) => <a href="#" key={n} aria-label={n}><svg width="16" height="16">{art}</svg></a>)}
        </Share>
        <SearchForm><Glass size={26} /><SearchInput aria-label="Search" /></SearchForm>
      </TopBar>

      <Title><b>Shenzhen</b> Air Pollution: Real-time Air Quality Index (AQI)</Title>

      <Tabs>
        {tabs.map(([en, zh, edge], i) => (
          <Tab href="#" key={en} $active={i === 0} $edge={edge}>{en}<small>{zh}</small></Tab>
        ))}
        <ToolTab href="#">
          <svg width="22" height="22" viewBox="0 0 22 22" fill="none" stroke="#777"><circle cx="11" cy="11" r="7.500" strokeWidth="1.500" /><circle cx="11" cy="11" r="4.500" fill="#777" /><path d="M11 0v5M11 17v5M0 11h5M17 11h5" strokeWidth="2" /></svg>
          <span>LOCATE THE<br />NEAREST CITY</span>
        </ToolTab>
        <ToolTab href="#">
          <svg width="22" height="22" viewBox="0 0 22 22" fill="none" stroke="#666"><circle cx="10" cy="10" r="7" strokeWidth="2.500" /><path d="m15 15 4 4" strokeWidth="3.500" /></svg>
          <span>SEARCH FOR<br />YOUR CITY</span>
        </ToolTab>
      </Tabs>

      <Main>
        <AqiCard>
          <CardHead>
            <h2>Shenzhen AQI:</h2>
            <p>Shenzhen Real-time Air Quality Index (AQI).</p>
            <HeadIcons>
              <svg width="18" height="22" viewBox="0 0 18 22" fill="#a8cfe4" stroke="#a8cfe4"><path d="M13 5 4 11l9 6" fill="none" /><circle cx="13" cy="5" r="3" /><circle cx="4" cy="11" r="2" /><circle cx="13" cy="17" r="3" /></svg>
              <Layers w={22} />
            </HeadIcons>
          </CardHead>
          <Reading>
            <BigNumber>179</BigNumber>
            <Verdict>
              <strong>Unhealthy</strong>
              <div>Updated on Sunday 22:00</div>
              <p>Temp.: <b>19</b>°C</p>
            </Verdict>
          </Reading>
          <Table>
            <colgroup><col width="58" /><col width="31" /><col width="311" /><col width="28" /><col width="30" /></colgroup>
            <thead><HeadRow><th colSpan={2}>Current</th><th>Past 48 hours data</th><th>Min</th><th>Max</th></HeadRow></thead>
            <tbody>
              {series.map(s => (
                <Row key={s.name} $tall={s.tall} $bg={s.bg}>
                  <th scope="row">{s.aqi ? <><b>{s.name}</b> <span>AQI</span></> : s.name}</th>
                  <td>{s.now}</td><td><Chart s={s} /></td><td>{s.min}</td><td>{s.max}</td>
                </Row>
              ))}
            </tbody>
          </Table>
        </AqiCard>

        <MapCard>
          <MapBox>
            <MapDrawing />
            {pins.map(([x, y, t, tone], i) => <Pin href="#" key={i} $x={x} $y={y} $tone={tone}><span>{t}</span></Pin>)}
            <ZoomBox><button aria-label="Zoom in">+</button><button aria-label="Zoom out">−</button></ZoomBox>
            <LayerButton aria-label="Layers"><Layers w={23} /></LayerButton>
            <Credit><a href="#">Leaflet</a> | © <a href="#">OpenStreetMap</a> contributors</Credit>
          </MapBox>
          <Ad>
            <p>Ad closed by <b>Google</b></p>
            <AdButtons>
              <AdButton $primary>Stop seeing this ad</AdButton>
              <AdButton>AdChoices <svg width="11" height="10" viewBox="0 0 11 10" fill="none" stroke="#999"><path d="M1 9V1l9 4-5 2.500M4 4v4" /></svg></AdButton>
            </AdButtons>
          </Ad>
        </MapCard>
      </Main>

      <Footer>
        {footer.map(([t, w, icon]) => <FootLink href="#" key={t} $w={w} aria-label={t || 'Settings'}>{icon}{t}</FootLink>)}
      </Footer>

      <Meter>
        <svg width="50" height="50">
          <path fill="#22bb22" d="M0 0h50v50H0z" /><circle cx="26" cy="26" r="18" fill="#5ccd5c" />
          <path d="M26 7a19 19 0 1 1-10 35" stroke="#fff" strokeWidth="2" fill="none" />
          <g fill="#fff" fontFamily="Noto Sans"><text x="11" y="31" fontSize="15">58</text><text x="30" y="31" fontSize="9">%</text></g>
        </svg>
      </Meter>

      <Notes>
        <svg width="640" height="500" fill="none" stroke="#ed1c24" strokeWidth="4">
          <ellipse cx="165" cy="165" rx="76" ry="60" />
          <path d="M49 30 61 142H55V255H43V142H37Z" />
          <g stroke={ink}>
            <ellipse cx="503" cy="215" rx="112" ry="41" />
            <path d="M77 354 312 304M285 290 312 304 296 333M77 354 131 350M110 335 131 350 114 364" strokeWidth="3" />
            <path d="M184 362l3 3" />
          </g>
        </svg>
        <DateNote>2017<br />1209<br />与<br />2017<br />1210</DateNote>
        <LevelNote><span>重</span><span>度</span><span>污</span><span>染</span></LevelNote>
      </Notes>
    </Page>
  );
}
